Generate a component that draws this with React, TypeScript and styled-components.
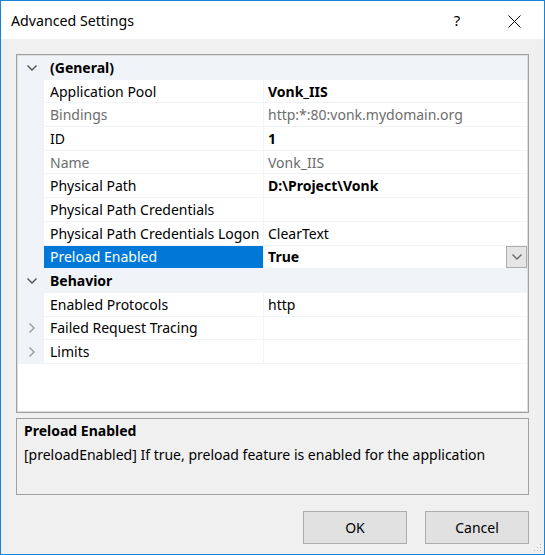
import React from "react";
import styled, { createGlobalStyle } from "styled-components";

const GlobalStyle = createGlobalStyle`
  html, body {
    margin: 0;
    padding: 0;
    background: #ffffff;
  }
  body {
    font-family: "Noto Sans", "Open Sans", sans-serif;
    color: #000000;
  }
`;

type PropRow = {
  name: string;
  value?: string;
  bold?: boolean;
  readOnly?: boolean;
  selected?: boolean;
  collapsed?: boolean;
};

type Category = {
  title: string;
  rows: PropRow[];
};

const categories: Category[] = [
  {
    title: "(General)",
    rows: [
      { name: "Application Pool", value: "Vonk_IIS", bold: true },
      { name: "Bindings", value: "http:*:80:vonk.mydomain.org", readOnly: true },
      { name: "ID", value: "1", bold: true },
      { name: "Name", value: "Vonk_IIS", readOnly: true },
      { name: "Physical Path", value: "D:\\Project\\Vonk", bold: true },
      { name: "Physical Path Credentials", value: "" },
      { name: "Physical Path Credentials Logon", value: "ClearText" },
      { name: "Preload Enabled", value: "True", bold: true, selected: true },
    ],
  },
  {
    title: "Behavior",
    rows: [
      { name: "Enabled Protocols", value: "http" },
      { name: "Failed Request Tracing", collapsed: true },
      { name: "Limits", collapsed: true },
    ],
  },
];

function ChevronDown({ color = "#505050" }: { color?: string }) {
  return (
    <svg width="10" height="6" viewBox="0 0 10 6">
      <polyline points="0.5,0.5 5,5 9.5,0.5" fill="none" stroke={color} strokeWidth="1.4" />
    </svg>
  );
}

function ChevronRight() {
  return (
    <svg width="6" height="10" viewBox="0 0 6 10">
      <polyline points="0.5,0.5 5,5 0.5,9.5" fill="none" stroke="#9a9a9a" strokeWidth="1.4" />
    </svg>
  );
}

export default function App() {
  return (
    <>
      <GlobalStyle />
      <Window>
        <TitleBar>
          <Title>Advanced Settings</Title>
          <TitleButtons>
            <HelpGlyph>?</HelpGlyph>
            <CloseIcon>
              <svg width="13" height="13" viewBox="0 0 13 13">
                <line x1="0.5" y1="0.5" x2="12.5" y2="12.5" stroke="#000" strokeWidth="1" />
                <line x1="12.5" y1="0.5" x2="0.5" y2="12.5" stroke="#000" strokeWidth="1" />
              </svg>
            </CloseIcon>
          </TitleButtons>
        </TitleBar>
        <Body>
          <GridFrame>
            <GridBody>
              {categories.map((cat) => (
                <React.Fragment key={cat.title}>
                  <CategoryRow>
                    <Margin>
                      <ChevronDown />
                    </Margin>
                    <CategoryTitle>{cat.title}</CategoryTitle>
                  </CategoryRow>
                  {cat.rows.map((row) => (
                    <Row key={row.name}>
                      <Margin>{row.collapsed && <ChevronRight />}</Margin>
                      <NameCell $selected={row.selected} $readOnly={row.readOnly}>
                        {row.name}
                      </NameCell>
                      <ValueCell $bold={row.bold} $readOnly={row.readOnly}>
                        <span>{row.value}</span>
                        {row.selected && (
                          <DropButton>
                            <ChevronDown color="#6a6a6a" />
                          </DropButton>
                        )}
                      </ValueCell>
                    </Row>
                  ))}
                </React.Fragment>
              ))}
            </GridBody>
          </GridFrame>
          <Description>
            <DescTitle>Preload Enabled</DescTitle>
            <DescText>[preloadEnabled] If true, preload feature is enabled for the application</DescText>
          </Description>
          <ButtonBar>
            <DialogButton>OK</DialogButton>
            <DialogButton>Cancel</DialogButton>
          </ButtonBar>
        </Body>
        <Grip>
          <svg width="8" height="8" viewBox="0 0 8 8">
            <rect x="6" y="0" width="1" height="1" fill="#b8b8b8" />
            <rect x="3" y="3" width="1" height="1" fill="#b8b8b8" />
            <rect x="6" y="3" width="1" height="1" fill="#b8b8b8" />
            <rect x="0" y="6" width="1" height="1" fill="#b8b8b8" />
            <rect x="3" y="6" width="1" height="1" fill="#b8b8b8" />
            <rect x="6" y="6" width="1" height="1" fill="#b8b8b8" />
          </svg>
        </Grip>
      </Window>
    </>
  );
}

const Window = styled.div`
  position: relative;
  width: 545px;
  height: 555px;
  box-sizing: border-box;
  border: 1px solid #1883d7;
  background: #f0f0f0;
  display: flex;
  flex-direction: column;
`;

const TitleBar = styled.div`
  height: 38px;
  background: #ffffff;
  display: flex;
  align-items: center;
  justify-content: space-between;
  padding-left: 10px;
`;

const Title = styled.div`
  font-size: 14.2px;
  color: #000;
`;

const TitleButtons = styled.div`
  display: flex;
  align-items: center;
  margin-right: 7px;
`;

const HelpGlyph = styled.div`
  width: 46px;
  text-align: center;
  font-size: 15px;
  margin-right: 11px;
`;

const CloseIcon = styled.div`
  width: 46px;
  display: flex;
  justify-content: center;
  padding-top: 2px;
`;

const Body = styled.div`
  flex: 1;
  display: flex;
  flex-direction: column;
  padding: 15px 15px 0;
`;

const GridFrame = styled.div`
  height: 359px;
  box-sizing: border-box;
  border: 1px solid #a0a0a0;
  padding: 1px;
  background: #dedede;
`;

const GridBody = styled.div`
  height: 100%;
  background: #ffffff;
  font-size: 14px;
`;

const RowBase = styled.div`
  height: 23.7px;
  display: flex;
  background: #f0f3f8;
`;

const CategoryRow = styled(RowBase)`
  align-items: center;
`;

const Row = styled(RowBase)``;

const Margin = styled.div`
  width: 26px;
  flex-shrink: 0;
  display: flex;
  align-items: center;
  justify-content: center;
  padding-left: 2px;
  box-sizing: border-box;
`;

const CategoryTitle = styled.div`
  font-weight: bold;
  padding-left: 6px;
  padding-bottom: 1px;
`;

const NameCell = styled.div<{ $selected?: boolean; $readOnly?: boolean }>`
  width: 219px;
  flex-shrink: 0;
  height: calc(100% - 1px);
  display: flex;
  align-items: center;
  padding-left: 6px;
  box-sizing: border-box;
  white-space: nowrap;
  overflow: hidden;
  background: ${(p) => (p.$selected ? "#0078d7" : "#ffffff")};
  color: ${(p) => (p.$selected ? "#ffffff" : p.$readOnly ? "#6d6d6d" : "#000000")};
`;

const ValueCell = styled.div<{ $bold?: boolean; $readOnly?: boolean }>`
  flex: 1;
  margin-left: 1px;
  height: calc(100% - 1px);
  display: flex;
  align-items: center;
  justify-content: space-between;
  padding-left: 4px;
  box-sizing: border-box;
  background: #ffffff;
  white-space: nowrap;
  font-weight: ${(p) => (p.$bold ? "bold" : "normal")};
  color: ${(p) => (p.$readOnly ? "#6d6d6d" : "#000000")};
`;

const DropButton = styled.div`
  width: 21px;
  height: 100%;
  box-sizing: border-box;
  border: 1px solid #adadad;
  background: #e5e5e5;
  display: flex;
  align-items: center;
  justify-content: center;
`;

const Description = styled.div`
  margin-top: 5px;
  height: 77px;
  box-sizing: border-box;
  border: 1px solid #a0a0a0;
  padding: 0 7px;
  font-size: 14px;
  line-height: 24px;
`;

const DescTitle = styled.div`
  font-weight: bold;
`;

const DescText = styled.div``;

const ButtonBar = styled.div`
  margin-top: 16px;
  display: flex;
  justify-content: flex-end;
  gap: 18px;
`;

const DialogButton = styled.button`
  width: 104px;
  height: 33px;
  border: 1px solid #adadad;
  background: #e1e1e1;
  font-family: "Noto Sans", "Open Sans", sans-serif;
  font-size: 14px;
  color: #000;
  padding: 0;
`;

const Grip = styled.div`
  position: absolute;
  right: 2px;
  bottom: 2px;
  line-height: 0;
`;
